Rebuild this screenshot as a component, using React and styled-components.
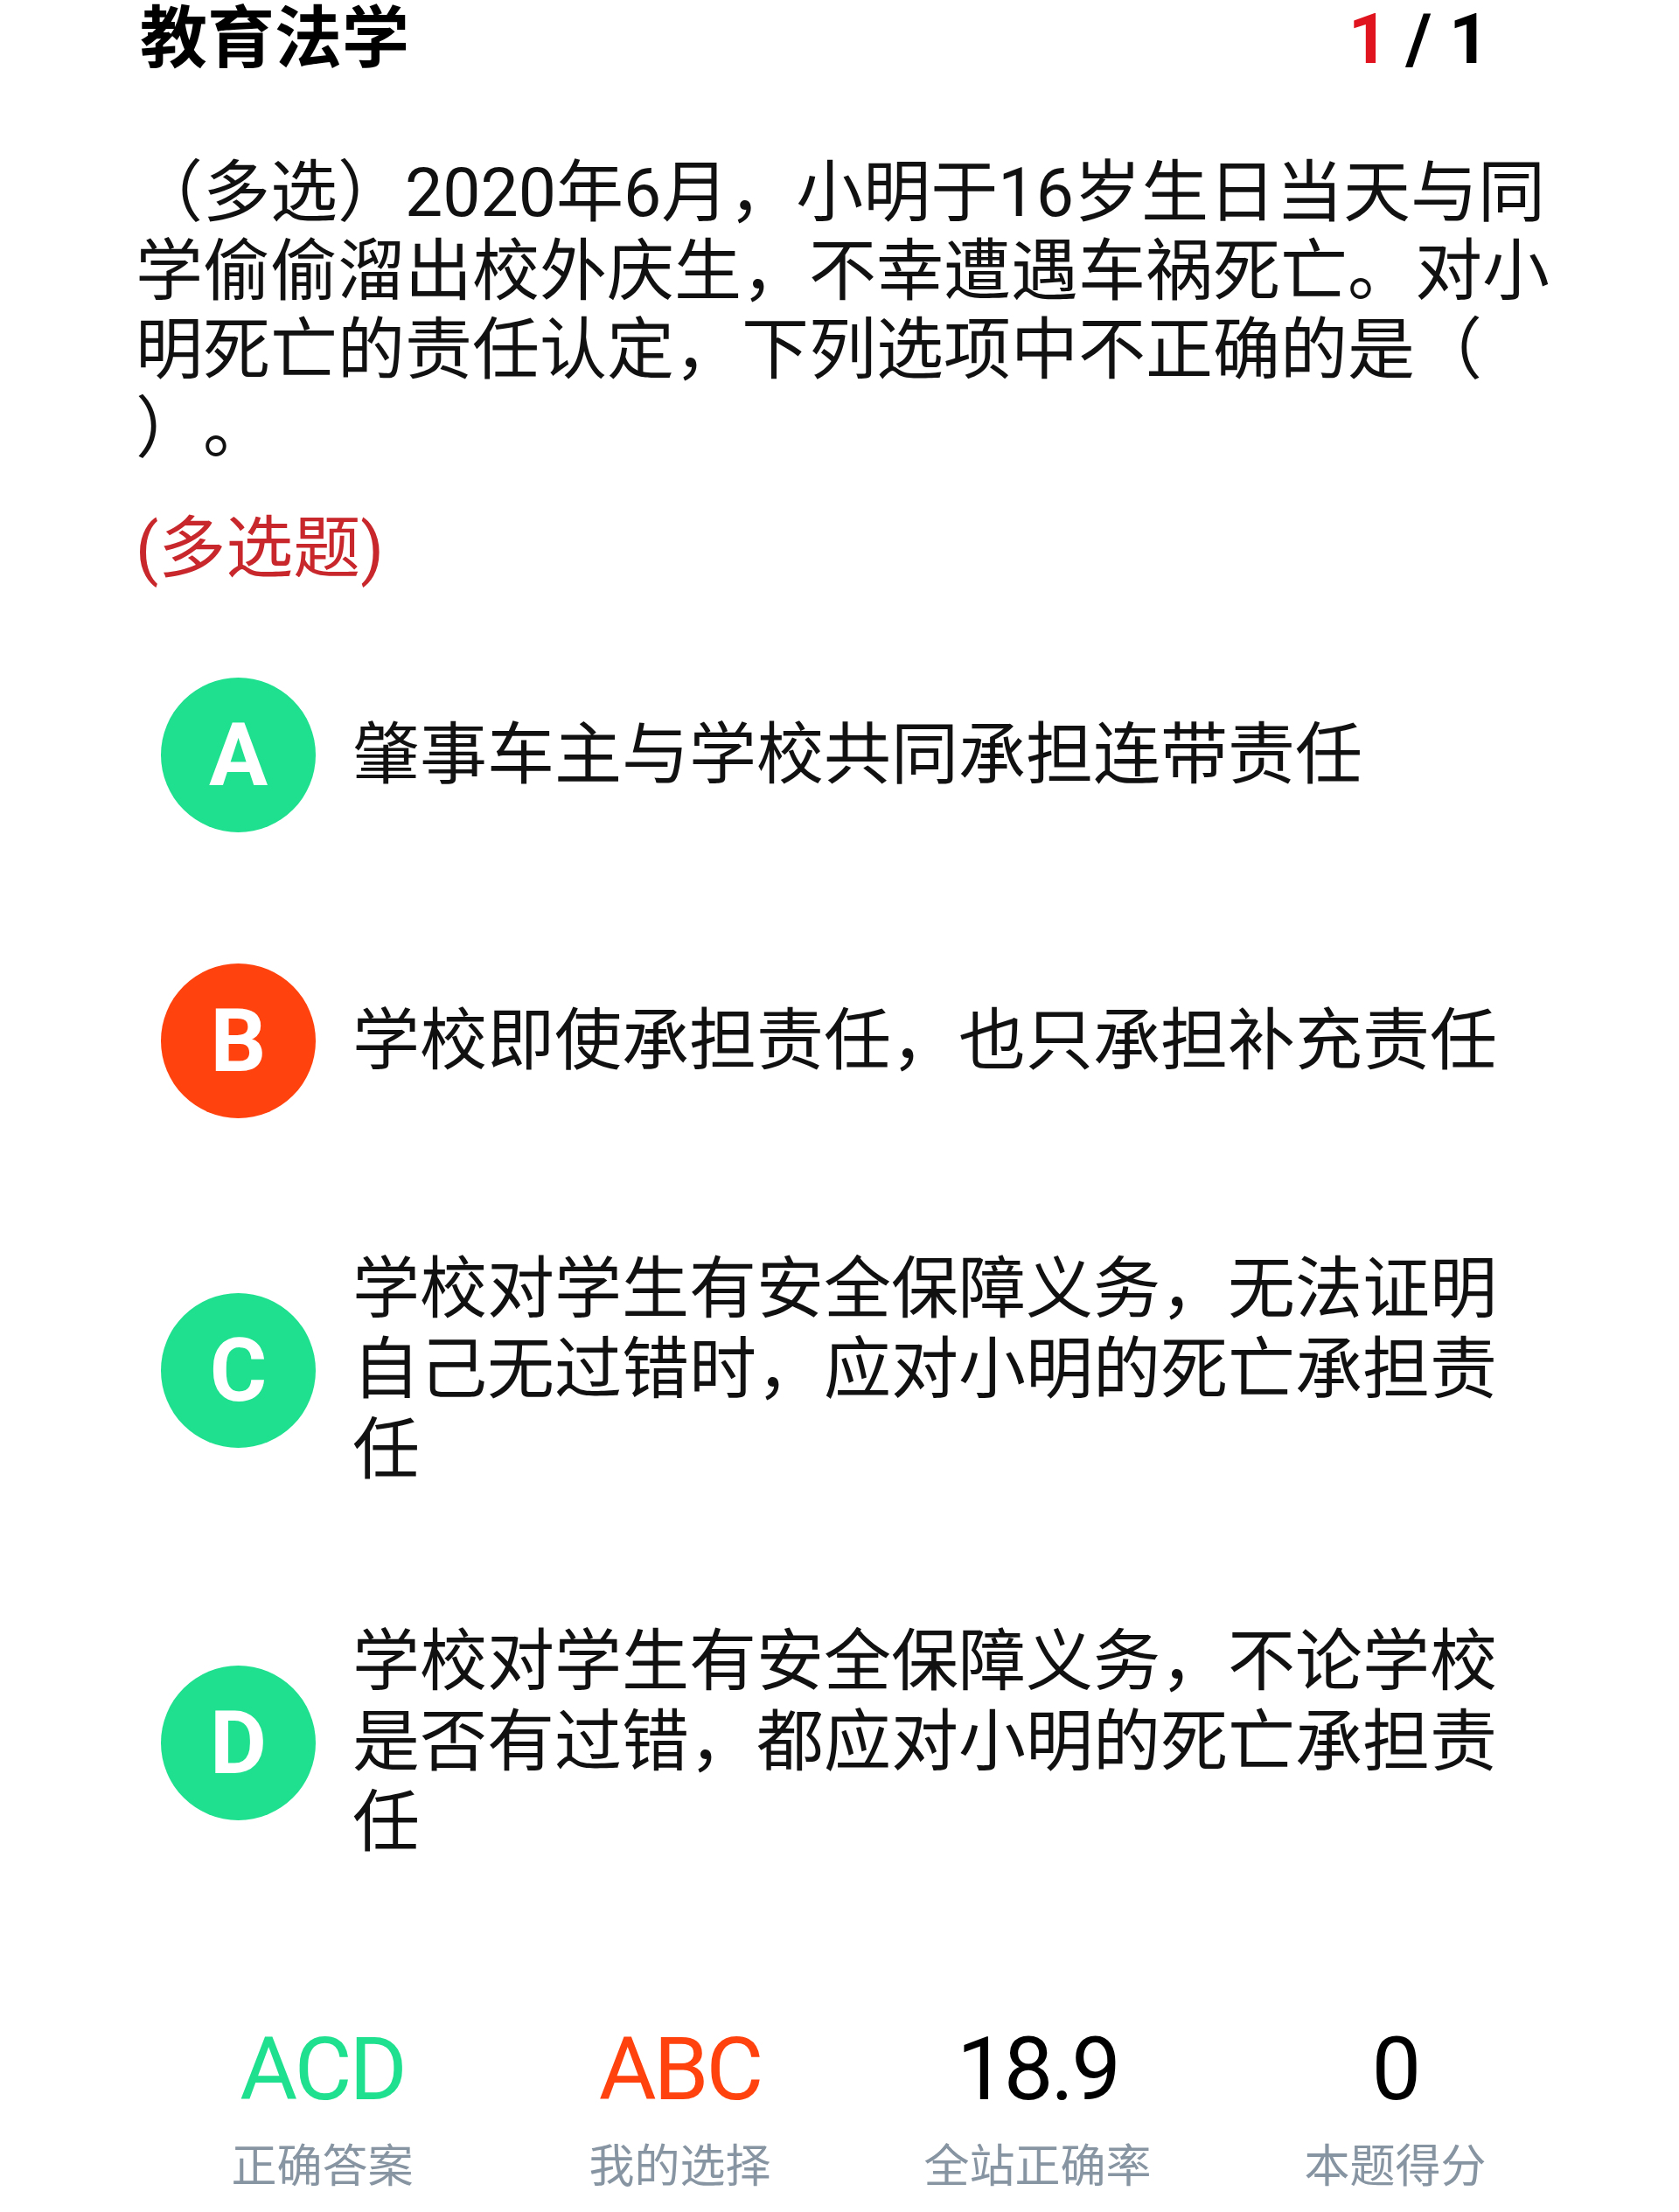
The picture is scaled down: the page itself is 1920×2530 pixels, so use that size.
import React from "react";
import styled, { createGlobalStyle } from "styled-components";

const GlobalStyle = createGlobalStyle`
  html, body {
    margin: 0;
    padding: 0;
    background: #fff;
  }
  body {
    font-family: "Roboto", "Noto Sans CJK SC", sans-serif;
    color: #111;
    text-spacing-trim: space-all;
  }
`;

const Page = styled.div`
  width: 1920px;
  min-height: 2530px;
  background: #fff;
`;

const Header = styled.div`
  display: flex;
  justify-content: space-between;
  align-items: center;
  height: 90px;
  padding: 0 217px 0 160px;
`;

const Title = styled.h1`
  margin: 0;
  font-size: 77px;
  font-weight: 700;
  line-height: 90px;
  color: #000;
`;

const Counter = styled.div`
  font-family: "Roboto", sans-serif;
  font-size: 80px;
  font-weight: 700;
  line-height: 90px;
  color: #000;
  white-space: pre;
`;

const Current = styled.span`
  color: #e0141e;
`;

const Question = styled.p`
  margin: 86px 0 0 155px;
  width: 1630px;
  font-size: 77px;
  line-height: 90px;
  color: #111;
`;

const Tag = styled.div`
  margin: 47px 0 0 155px;
  font-size: 77px;
  line-height: 90px;
  color: #c8272b;
`;

const OptionList = styled.div`
  margin-top: 27px;
`;

const OptionRow = styled.div`
  display: flex;
  align-items: center;
  gap: 42px;
  padding: 75px 0 75px 184px;
`;

const Badge = styled.div`
  flex: none;
  width: 177px;
  height: 177px;
  border-radius: 50%;
  background: ${props => (props.wrong ? "#ff420e" : "#1fe08f")};
  color: #fff;
  display: flex;
  align-items: center;
  justify-content: center;
  font-family: "Roboto", sans-serif;
  font-size: 100px;
  font-weight: 700;
`;

const OptionText = styled.div`
  width: 1320px;
  font-size: 77px;
  line-height: 92px;
  color: #111;
`;

const Stats = styled.div`
  display: grid;
  grid-template-columns: repeat(4, 409px);
  margin: 101px 0 0 164px;
`;

const Stat = styled.div`
  display: flex;
  flex-direction: column;
  align-items: center;
`;

const StatValue = styled.div`
  font-family: "Roboto", sans-serif;
  font-size: 101px;
  font-weight: 400;
  line-height: 120px;
  letter-spacing: -3px;
  color: ${props => props.color || "#000"};
`;

const StatLabel = styled.div`
  margin-top: 22px;
  font-size: 52px;
  line-height: 60px;
  color: #8794a1;
`;

const options = [
  { key: "A", text: "肇事车主与学校共同承担连带责任" },
  { key: "B", text: "学校即使承担责任，也只承担补充责任", wrong: true },
  { key: "C", text: "学校对学生有安全保障义务，无法证明自己无过错时，应对小明的死亡承担责任" },
  { key: "D", text: "学校对学生有安全保障义务，不论学校是否有过错，都应对小明的死亡承担责任" },
];

const stats = [
  { value: "ACD", label: "正确答案", color: "#1fe08f" },
  { value: "ABC", label: "我的选择", color: "#ff420e" },
  { value: "18.9", label: "全站正确率" },
  { value: "0", label: "本题得分" },
];

export default function App() {
  return (
    <Page>
      <GlobalStyle />
      <Header>
        <Title>教育法学</Title>
        <Counter>
          <Current>1</Current> / 1
        </Counter>
      </Header>
      <Question>
        （多选）2020年6月，小明于16岁生日当天与同学偷偷溜出校外庆生，不幸遭遇车祸死亡。对小明死亡的责任认定，下列选项中不正确的是（<wbr />）。
      </Question>
      <Tag>(多选题)</Tag>
      <OptionList>
        {options.map(opt => (
          <OptionRow key={opt.key}>
            <Badge wrong={opt.wrong}>{opt.key}</Badge>
            <OptionText>{opt.text}</OptionText>
          </OptionRow>
        ))}
      </OptionList>
      <Stats>
        {stats.map(s => (
          <Stat key={s.label}>
            <StatValue color={s.color}>{s.value}</StatValue>
            <StatLabel>{s.label}</StatLabel>
          </Stat>
        ))}
      </Stats>
    </Page>
  );
}
